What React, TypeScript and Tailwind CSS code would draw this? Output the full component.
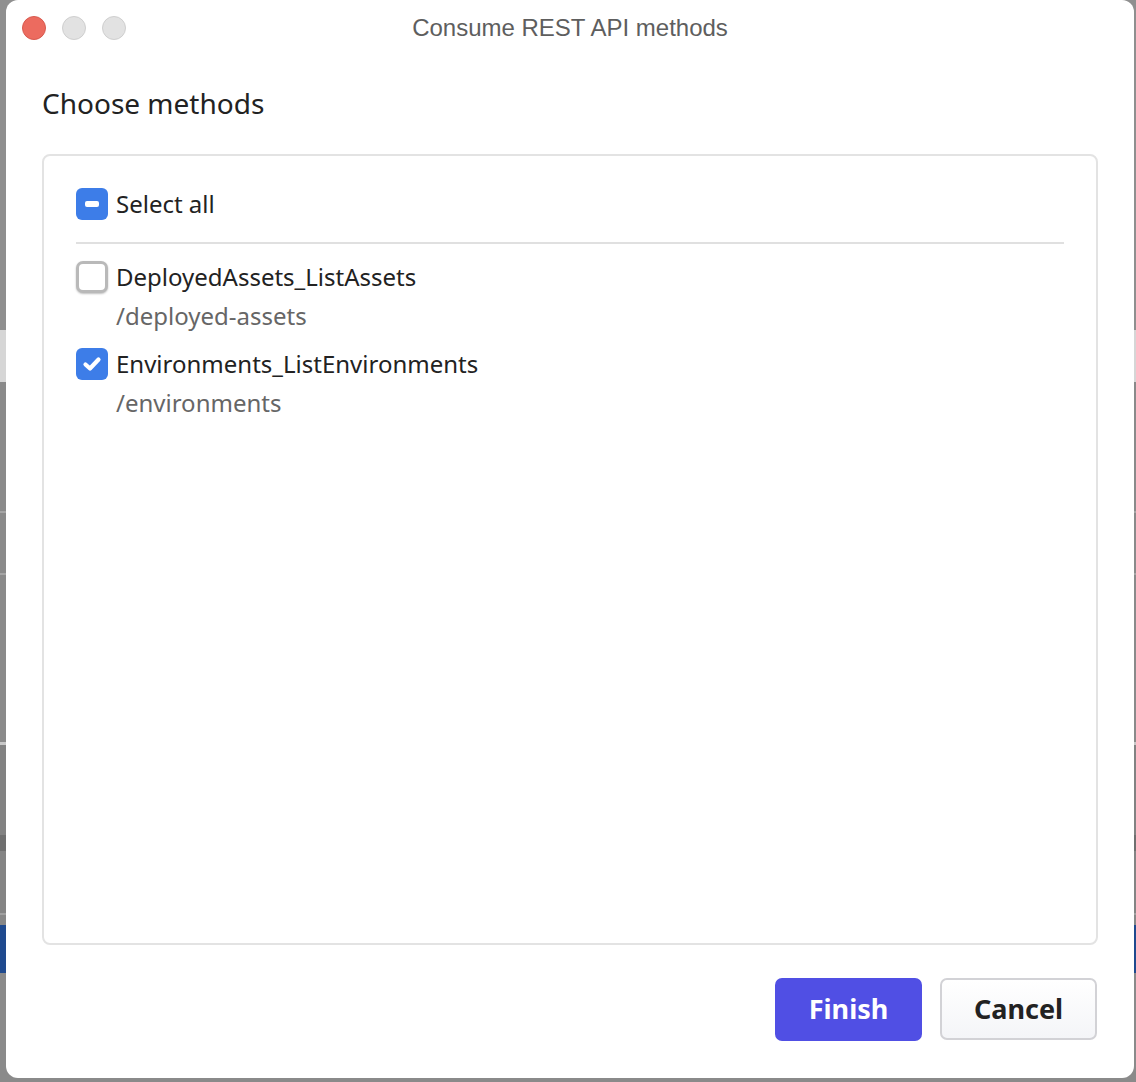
import React from 'react';

const methods = [
    { name: 'DeployedAssets_ListAssets', path: '/deployed-assets', checked: false },
    { name: 'Environments_ListEnvironments', path: '/environments', checked: true },
];

function Checkbox({ state }: { state: 'checked' | 'unchecked' | 'mixed' }) {
    if (state === 'unchecked') {
        return (
            <span className="w-[32px] h-[32px] shrink-0 rounded-[7px] border-[3px] border-[#b9b9b9] bg-white shadow-[0_1px_2px_rgba(0,0,0,0.25)]" />
        );
    }
    return (
        <span className="w-[32px] h-[32px] shrink-0 rounded-[6px] bg-[#3d7de8] flex items-center justify-center">
            {state === 'mixed' ? (
                <span className="w-[14px] h-[6px] rounded-[2px] bg-white" />
            ) : (
                <svg width="22" height="22" viewBox="0 0 22 22">
                    <path d="M4.5 11.5 L9 15.5 L17.5 6.5" fill="none" stroke="white" strokeWidth="4.2" strokeLinecap="round" strokeLinejoin="round" />
                </svg>
            )}
        </span>
    );
}

function Backdrop() {
    // what peeks out from under the dialog
    return (
        <div className="flex flex-col w-full h-full bg-[#8d8d8d]">
            <div className="h-[330px] bg-[#8f8f8f]" />
            <div className="h-[52px] bg-[#d6d6d6]" />
            <div className="h-[129px] bg-[#8a8a8a]" />
            <div className="h-[2px] bg-[#a5a5a5]" />
            <div className="h-[60px] bg-[#8a8a8a]" />
            <div className="h-[2px] bg-[#a5a5a5]" />
            <div className="h-[167px] bg-[#8a8a8a]" />
            <div className="h-[3px] bg-[#c8c8c8]" />
            <div className="h-[90px] bg-[#828282]" />
            <div className="h-[16px] bg-[#6f6f6f]" />
            <div className="h-[62px] bg-[#848484]" />
            <div className="h-[2px] bg-[#a0a0a0]" />
            <div className="h-[10px] bg-[#878787]" />
            <div className="h-[48px] bg-[#1f4a8e]" />
            <div className="flex-1 bg-[#8a8a8a]" />
        </div>
    );
}

export default function App() {
    return (
        <div className="relative w-[1136px] h-[1082px] overflow-hidden">
            <Backdrop />
            <div
                className="absolute left-[6px] top-0 w-[1128px] h-[1078px] bg-white rounded-[12px] flex flex-col"
                style={{ fontFamily: '"Noto Sans", "Open Sans", sans-serif' }}
            >
                {/* title bar */}
                <div className="relative h-[56px] flex items-center shrink-0">
                    <div className="flex items-center gap-[16px] pl-[16px]">
                        <span className="w-[24px] h-[24px] rounded-full bg-[#ec6b5f] border border-[#d85a4f]" />
                        <span className="w-[24px] h-[24px] rounded-full bg-[#e2e2e2] border border-[#cfcfcf]" />
                        <span className="w-[24px] h-[24px] rounded-full bg-[#e2e2e2] border border-[#cfcfcf]" />
                    </div>
                    <div
                        className="absolute inset-0 flex items-center justify-center text-[24px] text-[#5e5e5e]"
                        style={{ fontFamily: '"Liberation Sans", Arial, sans-serif' }}
                    >
                        Consume REST API methods
                    </div>
                </div>

                <div className="flex-1 flex flex-col px-[36px] pt-[29px] pb-[37px]">
                    <h1 className="text-[28px] leading-[36px] text-[#222] font-normal">Choose methods</h1>

                    <div className="mt-[33px] flex-1 border-2 border-[#e3e3e3] rounded-[8px] px-[32px] pt-[32px]">
                        <div className="flex items-center gap-[8px] h-[32px]">
                            <Checkbox state="mixed" />
                            <span className="text-[24px] leading-[32px] text-[#222]">Select all</span>
                        </div>
                        <div className="mt-[22px] mb-[17px] h-[2px] bg-[#e0e0e0]" />

                        <div className="flex flex-col gap-[16px]">
                            {methods.map((m) => (
                                <div key={m.name} className="flex flex-col">
                                    <div className="flex items-center gap-[8px] h-[32px]">
                                        <Checkbox state={m.checked ? 'checked' : 'unchecked'} />
                                        <span className="text-[24px] leading-[32px] text-[#222]">{m.name}</span>
                                    </div>
                                    <div className="mt-[7px] pl-[40px] text-[24px] leading-[32px] text-[#666]">{m.path}</div>
                                </div>
                            ))}
                        </div>
                    </div>

                    <div className="mt-[33px] flex justify-end gap-[18px] pr-[1px]">
                        <button className="w-[147px] h-[63px] rounded-[7px] bg-[#504fe4] text-white text-[27px] font-bold">
                            Finish
                        </button>
                        <button className="w-[157px] h-[62px] rounded-[7px] border-2 border-[#d2d2d6] bg-gradient-to-b from-white to-[#f4f5f8] text-[#222] text-[27px] font-bold">
                            Cancel
                        </button>
                    </div>
                </div>
            </div>
        </div>
    );
}
